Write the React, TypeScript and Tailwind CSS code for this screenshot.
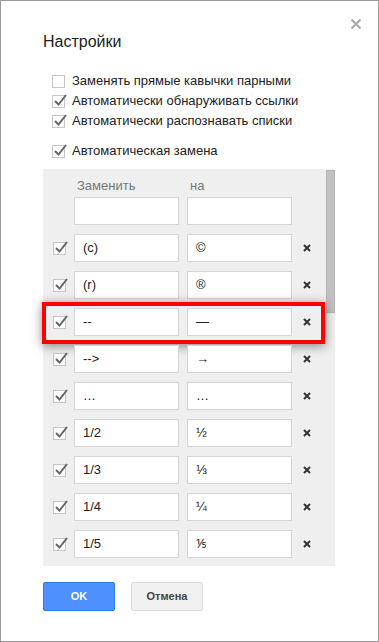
import React from 'react';

const rows: { from: string; to: string; checked: boolean }[] = [
  { from: '(c)', to: '©', checked: true },
  { from: '(r)', to: '®', checked: true },
  { from: '--', to: '—', checked: true },
  { from: '-->', to: '→', checked: true },
  { from: '…', to: '…', checked: true },
  { from: '1/2', to: '½', checked: true },
  { from: '1/3', to: '⅓', checked: true },
  { from: '1/4', to: '¼', checked: true },
  { from: '1/5', to: '⅕', checked: true },
];

function Check({ checked }: { checked: boolean }) {
  return (
    <span className="w-[13px] h-[13px] border border-[#c6c6c6] bg-white relative shrink-0 block">
      {checked && (
        <svg className="absolute left-[0px] top-[-3px]" width="15" height="14" viewBox="0 0 15 14">
          <path d="M2 8 L5.5 11.5 L13 2" stroke="#666" strokeWidth="2" fill="none" />
        </svg>
      )}
    </span>
  );
}

function Option({ label, checked }: { label: string; checked: boolean }) {
  return (
    <div className="flex items-center h-[20px] pl-[9px] gap-[7px]">
      <Check checked={checked} />
      <span className="text-[13px] text-[#222]">{label}</span>
    </div>
  );
}

function Field({ value }: { value: string }) {
  return (
    <div className="w-[105px] h-[28px] bg-white border border-[#d5d5d5] flex items-center pl-[8px] text-[13px] text-[#222] shrink-0">
      {value}
    </div>
  );
}

export default function App() {
  return (
    <div
      className="w-[379px] h-[642px] bg-white border border-[#999] relative"
      style={{ fontFamily: '"Liberation Sans", Arial, sans-serif' }}
    >
      <button className="absolute left-[348px] top-[16px] w-[14px] h-[14px]">
        <svg width="14" height="14" viewBox="0 0 14 14">
          <path d="M2.5 2.5 L11.5 11.5 M11.5 2.5 L2.5 11.5" stroke="#acacac" strokeWidth="2.2" />
        </svg>
      </button>

      <div className="pl-[42px] pt-[30px]">
        <h1 className="text-[16px] leading-[22px] text-[#222]">Настройки</h1>

        <div className="mt-[18px]">
          <Option label="Заменять прямые кавычки парными" checked={false} />
          <Option label="Автоматически обнаруживать ссылки" checked={true} />
          <Option label="Автоматически распознавать списки" checked={true} />
          <div className="h-[10px]" />
          <Option label="Автоматическая замена" checked={true} />
        </div>

        <div className="mt-[8px] w-[292px] h-[397px] bg-[#efefef] relative flex">
          <div className="flex-1 pt-[7px]">
            <div className="flex h-[20px] items-center text-[13px] text-[#777]">
              <span className="ml-[34px] w-[113px]">Заменить</span>
              <span>на</span>
            </div>
            <div className="flex gap-[8px] pl-[31px] mt-[1px]">
              <Field value="" />
              <Field value="" />
            </div>
            {rows.map((r, i) => (
              <div key={i} className="relative flex items-center pl-[10px] mt-[9px]">
                <Check checked={r.checked} />
                <div className="flex gap-[8px] ml-[8px]">
                  <Field value={r.from} />
                  <Field value={r.to} />
                </div>
                <svg className="ml-[11px]" width="8" height="8" viewBox="0 0 8 8">
                  <path d="M1 1 L7 7 M7 1 L1 7" stroke="#333" strokeWidth="2" />
                </svg>
                {i === 2 && (
                  <div className="absolute left-[-1px] top-[-6px] w-[283px] h-[42px] border-[4px] border-[#ff0000] shadow-[0_2px_10px_rgba(0,0,0,0.45)] pointer-events-none" />
                )}
              </div>
            ))}
          </div>
          <div className="w-[9px] shrink-0 pt-[1px]">
            <div className="h-[143px] bg-[#c1c1c1] border border-[#b5b5b5]" />
          </div>
        </div>

        <div className="flex gap-[16px] mt-[16px]">
          <button className="w-[72px] h-[29px] bg-[#4d90fe] border border-[#3079ed] rounded-[2px] text-white text-[11px] font-bold">
            OK
          </button>
          <button className="w-[72px] h-[29px] bg-[#f1f1f1] border border-[#dcdcdc] rounded-[2px] text-[#444] text-[11px] font-bold">
            Отмена
          </button>
        </div>
      </div>
    </div>
  );
}
